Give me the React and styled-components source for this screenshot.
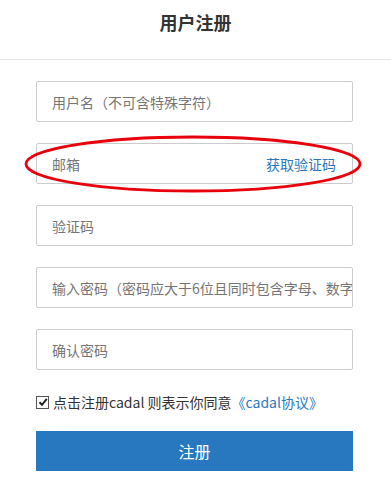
import React from 'react';
import styled, { createGlobalStyle } from 'styled-components';

const GlobalStyle = createGlobalStyle`
  html, body {
    margin: 0;
    padding: 0;
    background: #fff;
    font-family: "Noto Sans CJK SC", "Noto Sans", sans-serif;
  }
`;

const Page = styled.div`
  width: 391px;
  height: 483px;
  position: relative;
  overflow: hidden;
`;

const Header = styled.div`
  height: 59px;
  border-bottom: 1px solid #e5e5e5;
  display: flex;
  align-items: center;
  justify-content: center;
`;

const Title = styled.h1`
  margin: 0 0 16px;
  font-size: 18px;
  font-weight: 700;
  color: #333;
`;

const Form = styled.form`
  padding: 21px 38px 0 36px;
  display: flex;
  flex-direction: column;
  gap: 21px;
`;

const Field = styled.label`
  height: 41px;
  box-sizing: border-box;
  border: 1px solid #ccc;
  border-radius: 2px;
  display: flex;
  align-items: center;
  justify-content: space-between;
  padding: 0 16px 0 15px;
  overflow: hidden;
  white-space: nowrap;
`;

const Placeholder = styled.span`
  font-size: 14px;
  color: #757575;
`;

const Link = styled.a`
  font-size: 14px;
  color: #2a78bd;
  text-decoration: none;
`;

const Agree = styled.div`
  display: flex;
  align-items: center;
  gap: 4px;
  margin-top: 1px;
  font-size: 14px;
  color: #333;
  white-space: nowrap;
`;

const Check = styled.span`
  width: 11px;
  height: 11px;
  border: 1px solid #555;
  display: inline-flex;
  align-items: center;
  justify-content: center;
  flex-shrink: 0;
`;

const Submit = styled.button`
  margin-top: -2px;
  height: 40px;
  border: none;
  background: #2778be;
  color: #fff;
  font-family: inherit;
  font-size: 16px;
`;

const Mark = styled.svg`
  position: absolute;
  left: 22px;
  top: 134px;
  pointer-events: none;
`;

const fields = [
  { text: '用户名（不可含特殊字符）' },
  { text: '邮箱', action: '获取验证码' },
  { text: '验证码' },
  { text: '输入密码（密码应大于6位且同时包含字母、数字' },
  { text: '确认密码' },
];

export default function App() {
  return (
    <Page>
      <GlobalStyle />
      <Header>
        <Title>用户注册</Title>
      </Header>
      <Form>
        {fields.map((f, i) => (
          <Field key={i}>
            <Placeholder>{f.text}</Placeholder>
            {f.action && <Link>{f.action}</Link>}
          </Field>
        ))}
        <Agree>
          <Check>
            <svg width="10" height="10" viewBox="0 0 10 10">
              <path d="M1.5 5.2 L4 7.8 L8.8 1.8" fill="none" stroke="#222" strokeWidth="2" />
            </svg>
          </Check>
          <span>
            点击注册cadal 则表示你同意<Link>《cadal协议》</Link>
          </span>
        </Agree>
        <Submit type="button">注册</Submit>
      </Form>
      <Mark width="342" height="62" viewBox="0 0 342 62">
        <ellipse cx="171" cy="30" rx="167" ry="27" fill="none" stroke="#e8000b" strokeWidth="2.8" />
      </Mark>
    </Page>
  );
}
